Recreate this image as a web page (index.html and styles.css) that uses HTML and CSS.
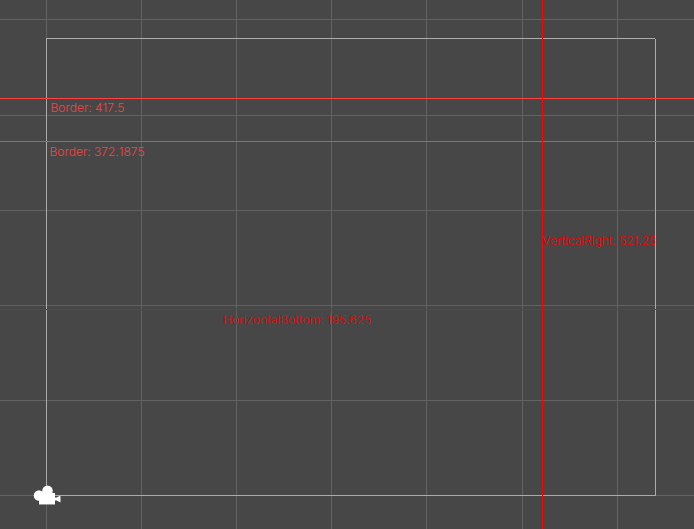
FILE: index.html
```html
<!DOCTYPE html>
<html lang="en"><head><meta charset="utf-8"><title>Scene</title><link rel="stylesheet" href="styles.css"></head>
<body><main class="scene">
<svg class="canvas" width="694" height="529" viewBox="0 0 694 529" shape-rendering="crispEdges">
<path class="grid" d="M46.5 0V529M141.5 0V529M236.5 0V529M331.5 0V529M426.5 0V529M522.5 0V529M617.5 0V529M0 19.5H694M0 115.5H694M0 210.5H694M0 305.5H694M0 400.5H694M0 495.5H694"/>
<path class="frame" d="M46 38.5H655M655.5 39V496M46 495.5H655M46.5 39V495"/>
<path class="border" d="M0 98.5H694M0 141.5H694"/>
<path class="guide" d="M542.5 0V529M0 309.5H694"/>
<g class="camera" shape-rendering="auto"><circle cx="39" cy="495.5" r="5.3"/><circle cx="47.5" cy="490.8" r="5.3"/><path d="M39 493H55V497.5H56.5L60.5 495.5V502.5L56.5 500.5H55V504.5H39Z"/></g>
</svg>
<span class="label border-label upper">Border: 417.5</span>
<span class="label border-label lower">Border: 372.1875</span>
<span class="label vertical">VerticalRight: 521.25</span>
<span class="label horizontal">HorizontalBottom: 195.625</span>
</main></body></html>
```
FILE: styles.css
```css
body { margin: 0; background: #474747; }
.scene { position: relative; width: 694px; height: 529px; overflow: hidden; }
.canvas { display: block; }
.canvas path { stroke-width: 1; }
.grid { stroke: #626262; fill: none; }
.frame { stroke: #ababab; fill: none; }
.border { stroke: #ff4040; }
.guide { stroke: #ff0000; }
.camera { fill: #fff; filter: drop-shadow(0 0 0.6px rgba(0, 0, 0, 0.5)); }
.camera path { stroke: none; }
.label { position: absolute; font: 350 12px/16px Inter, sans-serif; font-kerning: none; white-space: nowrap; color: #f00000; }
.border-label { color: #f44444; }
.upper { left: 50.5px; top: 100px; }
.lower { left: 49.5px; top: 144px; }
.vertical { left: 542px; top: 233px; }
.horizontal { left: 223px; top: 312px; letter-spacing: 0.03px; }
```
